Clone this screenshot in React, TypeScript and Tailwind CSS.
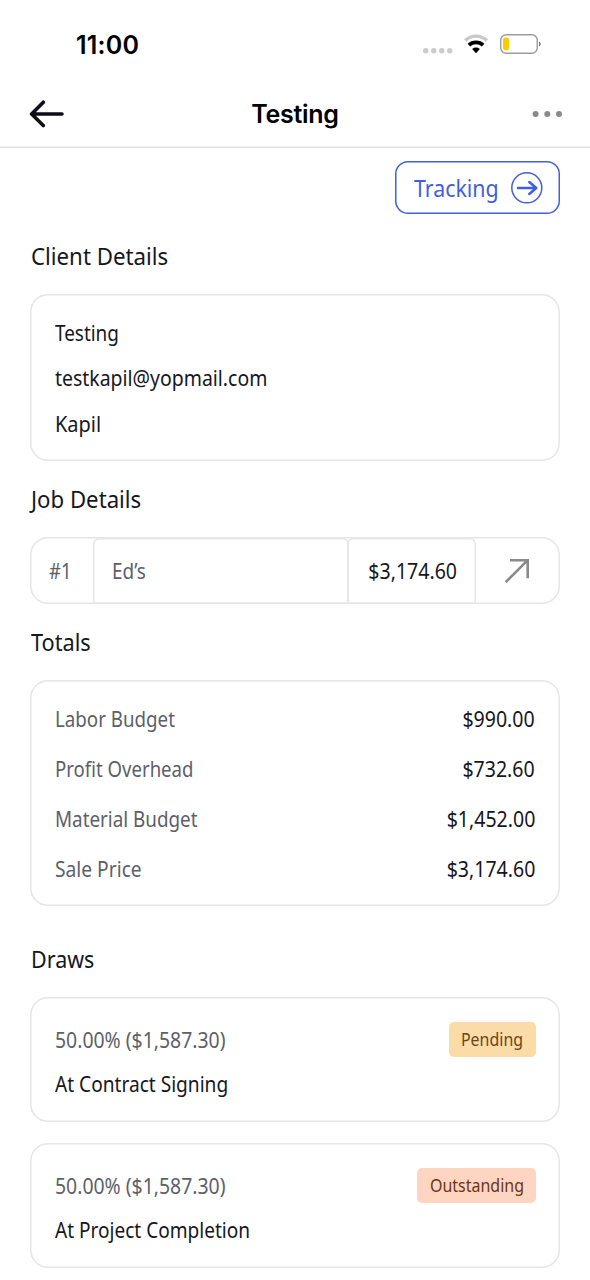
import type { ReactNode } from "react";

function T({ children, className = "" }: { children: ReactNode; className?: string }) {
  return <span className={`inline-block origin-left whitespace-nowrap ${className}`}>{children}</span>;
}

function Heading({ children, className = "", fit }: { children: ReactNode; className?: string; fit: string }) {
  return (
    <h2 className={`flex h-8 items-center pl-[0.5px] text-[23px] text-[#16171d] ${className}`}>
      <T className={fit}>{children}</T>
    </h2>
  );
}

function StatusBar() {
  return (
    <div className="flex h-[80px] items-center justify-between pt-[8px] pr-[48px] pl-[76px]">
      <span className="pt-[3px] font-['Inter'] text-[25px] font-semibold tracking-[0.2px] text-black">11:00</span>
      <div className="flex h-6 items-center">
        <svg width="30" height="20" viewBox="0 0 30 20" fill="#cbcbcb">
          <circle cx="2.7" cy="16.7" r="2.7" />
          <circle cx="10.7" cy="16.7" r="2.7" />
          <circle cx="18.7" cy="16.7" r="2.7" />
          <circle cx="26.7" cy="16.7" r="2.7" />
        </svg>
        <svg className="ml-[11px]" width="24" height="20" viewBox="0 0 24 20" fill="none">
          <path d="M1.1 6.6A15.6 15.6 0 0 1 22.9 6.6" stroke="#c9c9c9" strokeWidth="3.4" />
          <path d="M4.9 11.1A10.4 10.4 0 0 1 19.1 11.1" stroke="#000" strokeWidth="3.7" />
          <path d="M8.2 15.1A5.6 5.6 0 0 1 15.8 15.1L12 19.2Z" fill="#000" />
        </svg>
        <svg className="ml-[12px]" width="42" height="20" viewBox="0 0 42 20" fill="none">
          <rect x=".75" y=".75" width="36.5" height="18.5" rx="5.5" stroke="#9b9b9f" strokeWidth="1.4" />
          <rect x="3" y="3.5" width="6.2" height="12.7" rx="2.8" fill="#fccb02" />
          <path d="M39 7.5c2.2 1 2.2 4 0 5Z" fill="#77777a" />
        </svg>
      </div>
    </div>
  );
}

function Header() {
  return (
    <header className="grid h-[68px] grid-cols-3 items-center pr-[27px] pl-[29px] shadow-[inset_0_-1.5px_0_0_#dfdfe0]">
      <svg width="36" height="28" viewBox="0 0 36 28" fill="none" stroke="#0e0d18" strokeWidth="3.6" strokeLinecap="round" strokeLinejoin="round">
        <path d="M14.3 2.2 2.6 14l11.7 11.5M3 14h30" />
      </svg>
      <h1 className="pt-[2px] pr-[2px] text-center font-['Inter'] text-[25px] font-semibold tracking-[-0.3px] text-black">Testing</h1>
      <svg className="justify-self-end" width="31" height="8" viewBox="0 0 31 8" fill="#8a8a8c">
        <circle cx="3.6" cy="4" r="3" />
        <circle cx="15.3" cy="4" r="3" />
        <circle cx="27" cy="4" r="3" />
      </svg>
    </header>
  );
}

const card = "rounded-[18px] shadow-[inset_0_0_0_1.5px_#e6e6e8]";

function Draw({ amount, name, nameFit, status, badge }: { amount: string; name: string; nameFit: string; status: string; badge: string }) {
  return (
    <div className={`h-[125px] pt-[25px] pr-6 pl-[24.5px] ${card}`}>
      <div className="flex items-center justify-between">
        <T className="scale-x-[.924] pt-[3px] text-[21px] text-[#5d5f69]">{amount}</T>
        <span className={`flex h-[35px] items-center justify-center rounded-[5px] pt-px text-[18px] ${badge}`}>
          <span className="inline-block scale-x-[.887]">{status}</span>
        </span>
      </div>
      <div className="mt-[12px] flex h-8 items-center text-[21px] text-[#16171d]">
        <T className={nameFit}>{name}</T>
      </div>
    </div>
  );
}

const totals = [
  ["Labor Budget", "$990.00", "scale-x-[.892]"],
  ["Profit Overhead", "$732.60", "scale-x-[.885]"],
  ["Material Budget", "$1,452.00", "scale-x-[.897]"],
  ["Sale Price", "$3,174.60", "scale-x-[.915]"],
];

export default function App() {
  return (
    <div className="h-[1280px] w-[590px] overflow-hidden bg-white font-['Noto_Sans',sans-serif]">
      <StatusBar />
      <Header />
      <main className="px-[30px] pt-[13px]">
        <div className="flex justify-end">
          <button className="flex h-[53px] w-[165.5px] items-center justify-between rounded-[13px] pr-[17px] pl-[19.5px] text-[24px] text-[#3f5fe0] shadow-[inset_0_0_0_1.5px_#3f5fe0]">
            <T className="w-[84px] text-left"><T className="scale-x-[.89]">Tracking</T></T>
            <svg width="32" height="32" viewBox="0 0 32 32" fill="none" stroke="#3f5fe0" strokeLinecap="round" strokeLinejoin="round">
              <circle cx="15.8" cy="15.8" r="15" strokeWidth="1.5" />
              <path d="M7 16h18M18.3 10l7 6-7 6" strokeWidth="2.5" />
            </svg>
          </button>
        </div>

        <Heading className="mt-[26px]" fit="scale-x-[.968]">Client Details</Heading>
        <div className={`mt-[21.5px] flex h-[167.5px] flex-col justify-center pt-[3px] pl-[24.5px] text-[21px] text-[#16171d] ${card}`}>
          <div className="flex h-[45.5px] items-center"><T className="scale-x-[.9]">Testing</T></div>
          <div className="flex h-[45.5px] items-center"><T className="scale-x-[.926]">testkapil@yopmail.com</T></div>
          <div className="flex h-[45.5px] items-center"><T className="scale-x-[.95]">Kapil</T></div>
        </div>

        <Heading className="mt-[22px]" fit="scale-x-[.965]">Job Details</Heading>
        <div className={`mt-[21.5px] flex h-[67px] text-[21px] text-[#5d5f69] ${card}`}>
          <div className="flex w-[63px] items-center pt-[3px] pl-[18.5px]"><T className="scale-x-[.88]">#1</T></div>
          <div className="mt-px flex w-[256px] items-center rounded-t-[6px] pt-[2px] pl-[18.5px] shadow-[inset_0_0_0_1.5px_#e6e6e8]"><T className="scale-x-[.9]">Ed’s</T></div>
          <div className="mt-px -ml-[2px] flex w-[129px] items-center justify-center rounded-t-[6px] pt-[2px] pl-[2px] text-[#16171d] shadow-[inset_0_0_0_1.5px_#e6e6e8]">
            <span className="inline-block scale-x-[.93]">$3,174.60</span>
          </div>
          <div className="flex flex-1 items-center justify-center pt-px pr-[3px]">
            <svg width="26" height="26" viewBox="0 0 26 26" fill="none" stroke="#8a8a8a" strokeWidth="2.6">
              <path d="M1.7 24.2 23.7 2.2M6 2.3h17.7v18" />
            </svg>
          </div>
        </div>

        <Heading className="mt-[22.5px]" fit="scale-x-[.945]">Totals</Heading>
        <div className={`mt-[21.5px] flex h-[226.5px] flex-col justify-center pt-[3px] pr-[25px] pl-[24.5px] text-[21px] ${card}`}>
          {totals.map(([label, value, fit]) => (
            <div key={label} className="flex h-[50px] items-center justify-between">
              <T className={`text-[#5d5f69] ${fit}`}>{label}</T>
              <span className="inline-block origin-right scale-x-[.93] text-[#16171d]">{value}</span>
            </div>
          ))}
        </div>

        <Heading className="mt-[37px]" fit="scale-x-[.935]">Draws</Heading>
        <div className="mt-[21.5px] flex flex-col gap-[21px]">
          <Draw amount="50.00% ($1,587.30)" name="At Contract Signing" nameFit="scale-x-[.91]" status="Pending" badge="w-[87px] bg-[#fbdba7] text-[#6d4519]" />
          <Draw amount="50.00% ($1,587.30)" name="At Project Completion" nameFit="scale-x-[.907]" status="Outstanding" badge="w-[119px] bg-[#fdd5c0] text-[#6f3617]" />
        </div>
      </main>
    </div>
  );
}
